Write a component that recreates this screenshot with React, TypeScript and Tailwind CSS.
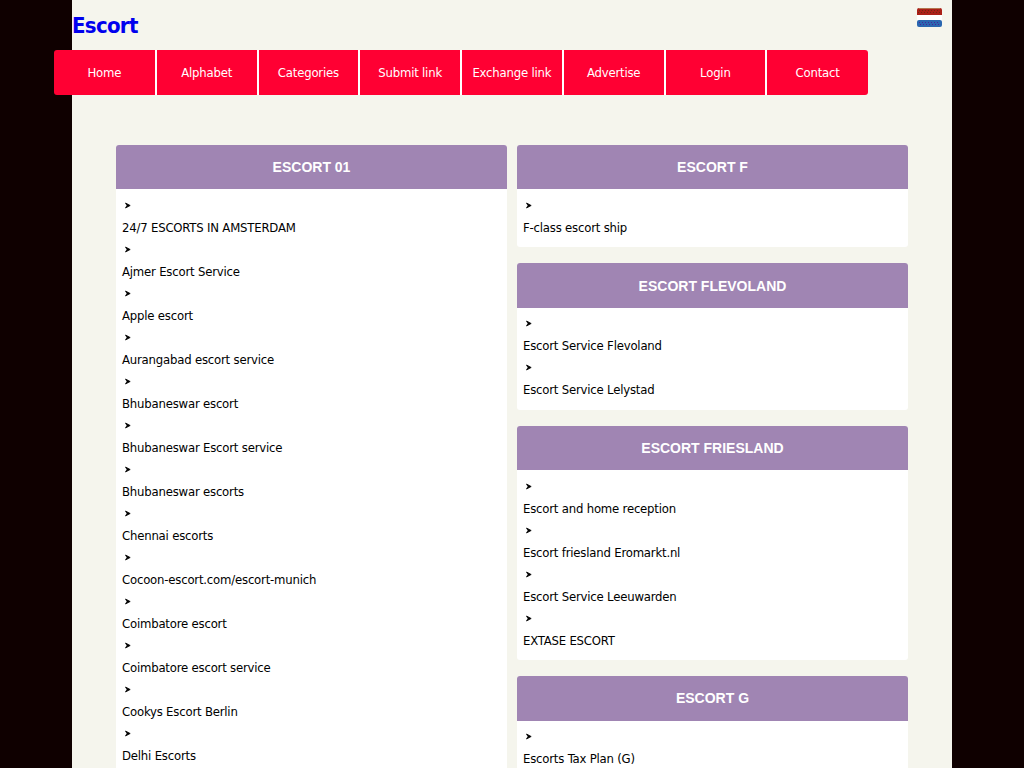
const NAV = ["Home", "Alphabet", "Categories", "Submit link", "Exchange link", "Advertise", "Login", "Contact"];

const LEFT = [
  {
    title: "ESCORT 01",
    links: [
      "24/7 ESCORTS IN AMSTERDAM",
      "Ajmer Escort Service",
      "Apple escort",
      "Aurangabad escort service",
      "Bhubaneswar escort",
      "Bhubaneswar Escort service",
      "Bhubaneswar escorts",
      "Chennai escorts",
      "Cocoon-escort.com/escort-munich",
      "Coimbatore escort",
      "Coimbatore escort service",
      "Cookys Escort Berlin",
      "Delhi Escorts",
    ],
  },
];

const RIGHT = [
  { title: "ESCORT F", links: ["F-class escort ship"] },
  { title: "ESCORT FLEVOLAND", links: ["Escort Service Flevoland", "Escort Service Lelystad"] },
  {
    title: "ESCORT FRIESLAND",
    links: ["Escort and home reception", "Escort friesland Eromarkt.nl", "Escort Service Leeuwarden", "EXTASE ESCORT"],
  },
  { title: "ESCORT G", links: ["Escorts Tax Plan (G)"] },
];

function Flag() {
  return (
    <svg width="25" height="19" viewBox="0 0 25 19" className="absolute top-2 right-[10px]">
      <rect width="25" height="9" y="0" rx="2" fill="#ab2018" />
      <rect width="25" height="6" y="7" fill="#ffffff" />
      <rect width="25" height="7" y="12" rx="2" fill="#2a66b0" />
      <path d="M2 0.5h21" stroke="#b5764f" />
      <path d="M2 2.5h21M1 4.5h23" stroke="#6e2a12" strokeDasharray="1 2" />
      <path d="M2 14.5h21M3 16.5h19" stroke="#4a2296" strokeDasharray="1 2" />
    </svg>
  );
}

function Box({ title, links }: { title: string; links: string[] }) {
  return (
    <div className="bg-white rounded-[3px] mb-4 pb-[9px]">
      <h2 className="h-[44.4px] rounded-t-[3px] bg-[#a085b3] flex items-center justify-center text-white text-sm font-bold font-['Liberation_Sans',sans-serif] tracking-normal">
        {title}
      </h2>
      <ul className="px-[6px] pt-[5px]">
        {links.map((link) => (
          <li key={link}>
            <div className="h-[22px] pl-[3px] flex items-center">
              <svg width="6" height="7" viewBox="0 0 6 7">
                <path d="M0.5 1 L5.2 3.5 L0.5 6 L2 3.5 Z" fill="#000" stroke="#000" strokeWidth="0.8" />
              </svg>
            </div>
            <div className="h-[22px] pt-[0.4px] leading-[22px] text-black">{link}</div>
          </li>
        ))}
      </ul>
    </div>
  );
}

export default function App() {
  return (
    <div className="h-screen overflow-hidden bg-[#0f0000] font-['DejaVu_Sans',sans-serif] [font-stretch:condensed] text-[13px] tracking-[-0.2px]">
      <div className="relative w-[880px] h-full ml-[72px] bg-[#f5f5ed]">
        <Flag />
        <h1 className="h-[50px] pt-[11px] leading-[30px] text-[22px] font-bold tracking-[-0.7px] text-[#0000ee]">Escort</h1>
        <nav className="flex -ml-[18px] w-[814px]">
          {NAV.map((item, i) => (
            <a
              key={item}
              className={`h-[45px] bg-[#ff0033] text-white flex items-center justify-center ${i === 0 ? "w-[102.75px] rounded-l-[3px] border-r-2 border-white" : i === NAV.length - 1 ? "w-[100.75px] rounded-r-[3px]" : "w-[101.75px] border-r-2 border-white"}`}
            >
              {item}
            </a>
          ))}
        </nav>
        <div className="flex gap-[10px] mx-11 mt-[50px]">
          <div className="w-[391px]">
            {LEFT.map((b) => (
              <Box key={b.title} {...b} />
            ))}
          </div>
          <div className="w-[391px]">
            {RIGHT.map((b) => (
              <Box key={b.title} {...b} />
            ))}
          </div>
        </div>
      </div>
    </div>
  );
}
